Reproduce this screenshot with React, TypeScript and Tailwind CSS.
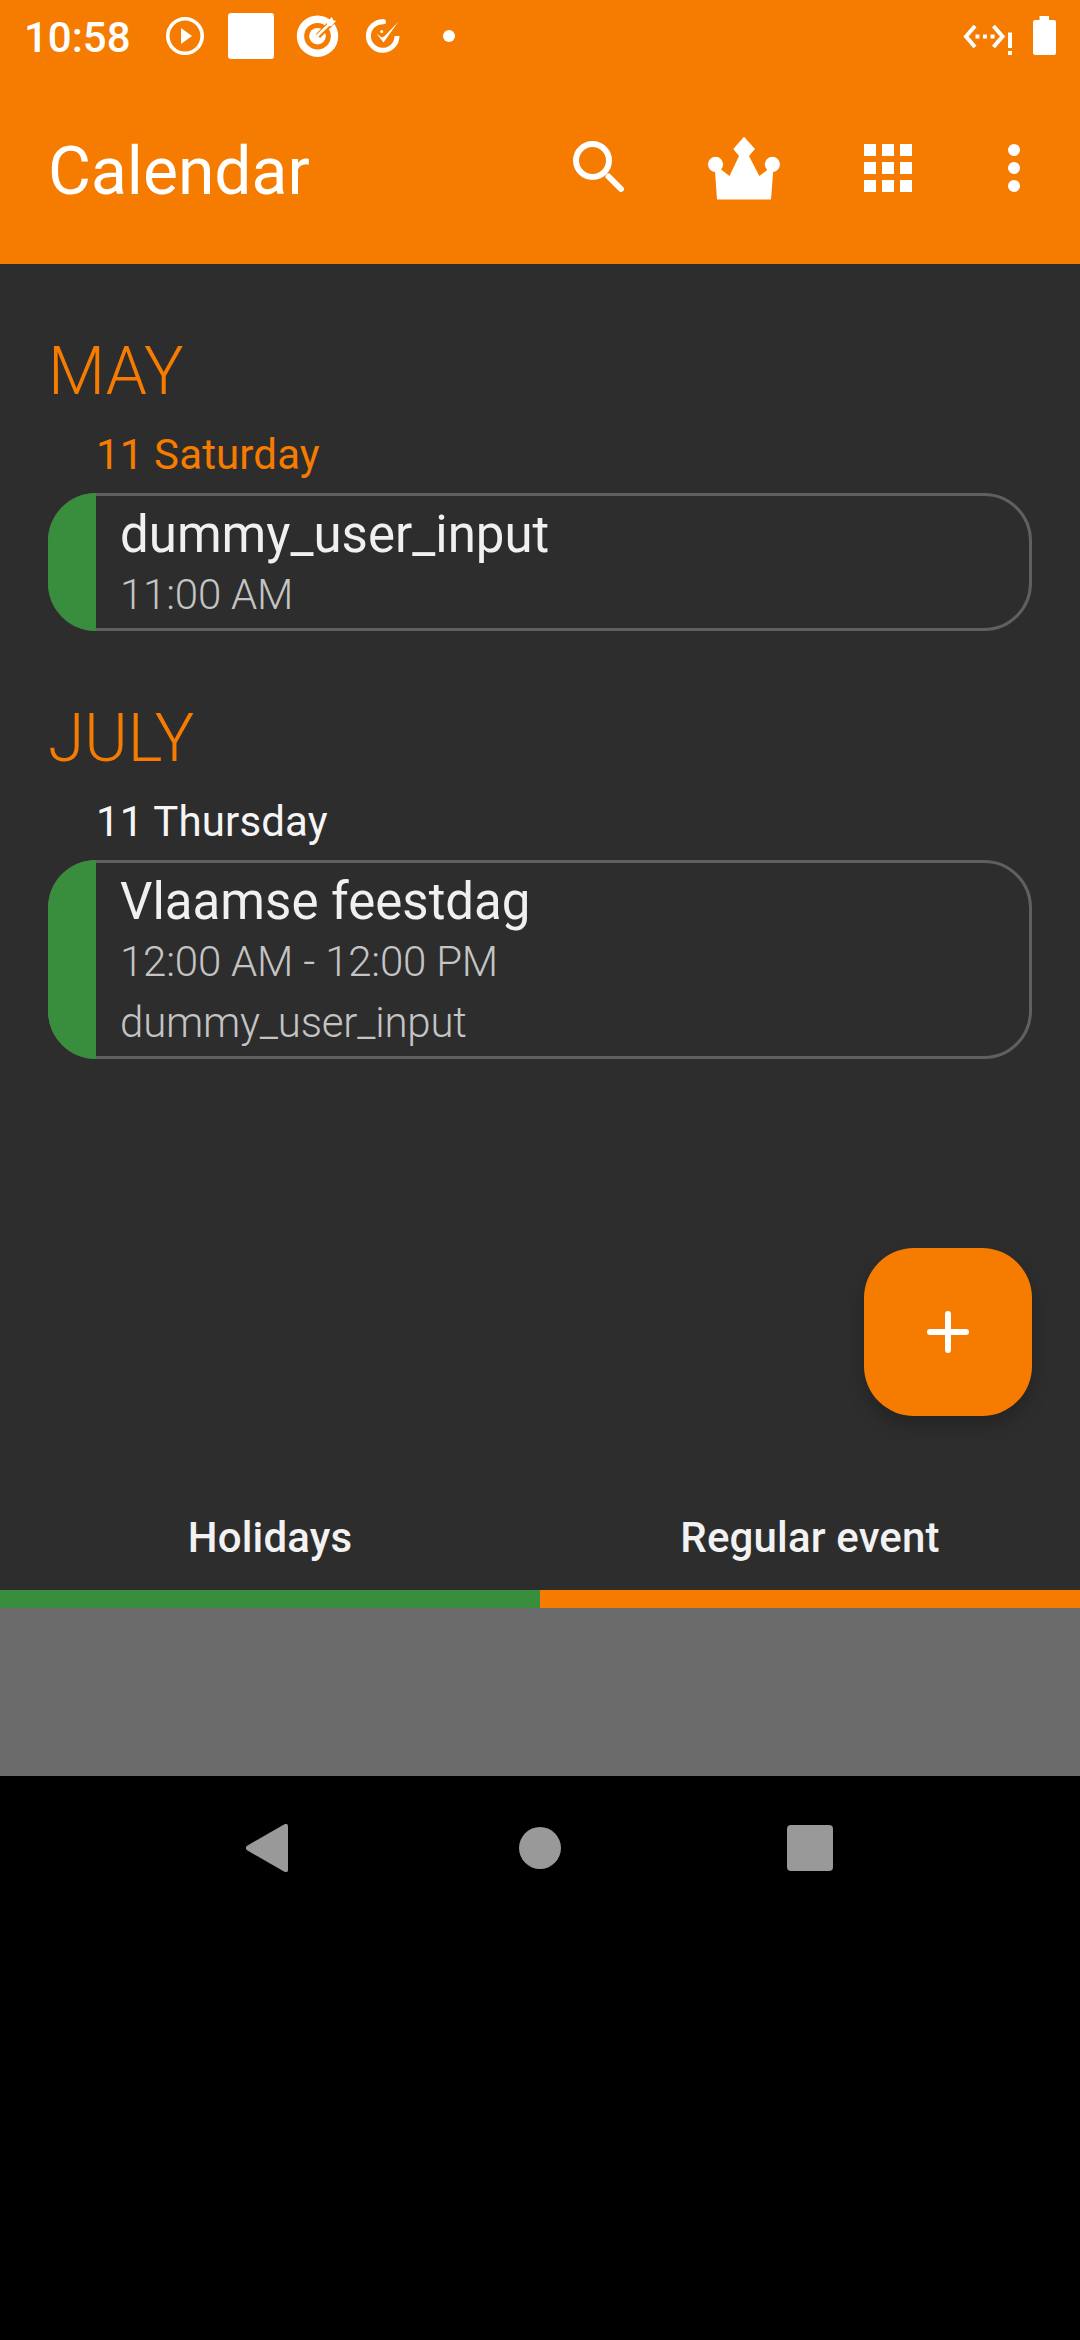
import type { ReactNode } from "react";

type CalendarEvent = { title: string; time: string; note?: string };

function StatusBar() {
  return (
    <div className="flex h-[72px] items-center pl-6 pr-6">
      <span className="w-[140px] pt-[3px] text-[42px] leading-[50px] font-medium">10:58</span>
      <svg className="h-[72px] w-[300px]" viewBox="164 0 300 72" fill="none">
        <circle cx="185" cy="36" r="17.2" stroke="white" strokeWidth="3.6" />
        <path d="M181 28v16l11-8z" fill="white" />
        <rect x="228" y="13" width="46" height="46" rx="3" fill="white" />
        <circle cx="317.5" cy="36.2" r="17" stroke="white" strokeWidth="7.4" />
        <circle cx="317.5" cy="36.2" r="8.3" fill="white" />
        <path d="M318 36l16-16" stroke="#f57c00" strokeWidth="6" />
        <path d="M316.500 36.500L331 22.500" stroke="white" strokeWidth="2.600" />
        <path d="M327 25.500v-4l5-4.500 1 3 3 1-4.500 5h-4z" fill="white" />
        <path d="M383.500 21.700A14.300 14.300 0 1 0 397 36" stroke="white" strokeWidth="5" />
        <circle cx="383.500" cy="21.700" r="2.500" fill="white" />
        <path d="M376.500 33.500l7 9 15-21-14.300 15-2.300 1z" fill="white" />
        <circle cx="381.700" cy="31.500" r="1.500" fill="white" />
        <circle cx="449" cy="36" r="6" fill="white" />
      </svg>
      <svg className="ml-auto h-[72px] w-[96px]" viewBox="960 0 96 72" fill="none">
        <path d="M975 26l-9 10.500 9 10.500M993.500 26l9 10.500-9 10.500" stroke="white" strokeWidth="4" />
        <path d="M975.500 34.500h4v4h-4zM983 34.500h4v4h-4zM990.500 34.500h4v4h-4zM1008 32.500h4v15.500h-4zM1008 51h4v4h-4z" fill="white" />
        <path d="M1039.500 16h9.500v4h5q2 0 2 2v31q0 2-2 2h-19q-2 0-2-2V22q0-2 2-2h4.500z" fill="white" />
      </svg>
    </div>
  );
}

function AppBar() {
  return (
    <div className="flex h-[192px] items-start pl-12 pr-[60px]">
      <h1 className="mt-[61px] text-[66px] leading-[78px] font-normal">Calendar</h1>
      <div className="mt-[60px] ml-auto flex items-center">
        <svg className="h-[72px] w-[72px]" viewBox="564 132 72 72" fill="none" stroke="white" strokeWidth="6">
          <circle cx="592.500" cy="160.500" r="16.500" />
          <path d="M608.500 176.500l12.500 12.500" strokeLinecap="round" />
        </svg>
        <svg className="ml-[68px] h-[72px] w-[80px]" viewBox="704 132 80 72" fill="white">
          <path d="M744 136.700l11 12.300-6 7 10.300 20 9.200-7 4.700 2-2.200 28.500h-54l-2-28.500 5.500-2 9 7L739 156l-5.700-7z" />
          <circle cx="715.500" cy="164.300" r="7.600" />
          <circle cx="772.400" cy="164.300" r="7.600" />
        </svg>
        <svg className="ml-[68px] h-[72px] w-[72px]" viewBox="852 132 72 72" fill="white">
          <path d="M864 144h12v12h-12zM882 144h12v12h-12zM900 144h12v12h-12zM864 162h12v12h-12zM882 162h12v12h-12zM900 162h12v12h-12zM864 180h12v12h-12zM882 180h12v12h-12zM900 180h12v12h-12z" />
        </svg>
        <svg className="ml-[84px] h-[72px] w-3" viewBox="1008 132 12 72" fill="white">
          <circle cx="1014" cy="150" r="6" />
          <circle cx="1014" cy="168" r="6" />
          <circle cx="1014" cy="186" r="6" />
        </svg>
      </div>
    </div>
  );
}

function EventCard({ title, time, note }: CalendarEvent) {
  return (
    <div className="overflow-hidden rounded-[48px] border-[3px] border-[#606060] bg-clip-padding">
      <div className="flex flex-col pt-[9px] pb-2 pl-[69px]">
        <span className="h-[60px] text-[51px] leading-[60px] text-[#f0f0f0]">{title}</span>
        <span className="h-[55px] pt-[5px] text-[42px] leading-[50px] font-light tracking-[-0.2px] text-[#c4c4c4]">{time}</span>
        {note && (
          <span className="mt-1.5 h-[55px] pt-[5px] text-[42px] leading-[50px] font-light tracking-[-0.2px] text-[#c4c4c4]">{note}</span>
        )}
      </div>
    </div>
  );
}

function MonthSection({ month, day, today, event }: { month: string; day: string; today?: boolean; event: CalendarEvent }) {
  return (
    <section className="flex flex-col">
      <h2 className="text-[66px] leading-[78px] font-light text-[#f57c00]">{month}</h2>
      <h3 className={today ? "mt-[19px] pl-12 text-[42px] leading-[50px] tracking-[0.15px] text-[#f57c00]" : "mt-[19px] pl-12 text-[42px] leading-[50px] tracking-[0.15px] text-[#f5f5f5]"}>
        {day}
      </h3>
      <div className="relative mt-[13px]">
        <EventCard {...event} />
        <div className="absolute inset-y-0 left-0 w-12 rounded-l-[48px] bg-[#388e3c]" />
      </div>
    </section>
  );
}

function Tab({ bar, children }: { bar: string; children: ReactNode }) {
  return (
    <div className="flex flex-1 flex-col text-center">
      <span className="h-[77px] text-[42px] leading-[50px] font-medium tracking-[0.15px] text-[#f2f2f2]">{children}</span>
      <div className={"h-[18px] " + bar} />
    </div>
  );
}

export default function App() {
  return (
    <div className="flex h-[2340px] w-[1080px] flex-col overflow-hidden bg-black font-['Roboto',sans-serif] text-white">
      <header className="h-[264px] bg-[#f57c00]">
        <StatusBar />
        <AppBar />
      </header>
      <main className="relative flex h-[1344px] flex-col bg-[#2d2d2d]">
        <div className="flex flex-col gap-[69px] px-12 pt-[69px]">
          <MonthSection month="MAY" day="11 Saturday" today event={{ title: "dummy_user_input", time: "11:00 AM" }} />
          <MonthSection
            month="JULY"
            day="11 Thursday"
            event={{ title: "Vlaamse feestdag", time: "12:00 AM - 12:00 PM", note: "dummy_user_input" }}
          />
        </div>
        <button className="absolute right-12 bottom-48 flex h-[168px] w-[168px] items-center justify-center rounded-[50px] bg-[#f57c00] shadow-[0_9px_18px_rgba(0,0,0,0.22)]">
          <svg className="h-[42px] w-[42px]" viewBox="0 0 42 42" stroke="white" strokeWidth="6" strokeLinecap="round">
            <path d="M21 3v36M3 21h36" />
          </svg>
        </button>
        <div className="mt-auto flex">
          <Tab bar="bg-[#388e3c]">Holidays</Tab>
          <Tab bar="bg-[#f57c00]">Regular event</Tab>
        </div>
      </main>
      <div className="h-[168px] bg-[#6b6b6b]" />
      <nav className="grid h-36 grid-cols-3 items-center px-[135px]">
        <svg className="h-12 w-12 justify-self-center" viewBox="246 1824 48 48" fill="#999999">
          <path d="M247.500 1845.500L284 1824.500q4-2 4 2v43q0 4-4 2L247.500 1850.500q-3.500-2.500 0-5z" />
        </svg>
        <div className="h-[42px] w-[42px] justify-self-center rounded-full bg-[#999999]" />
        <div className="h-[46px] w-[46px] justify-self-center rounded-[4px] bg-[#999999]" />
      </nav>
    </div>
  );
}
